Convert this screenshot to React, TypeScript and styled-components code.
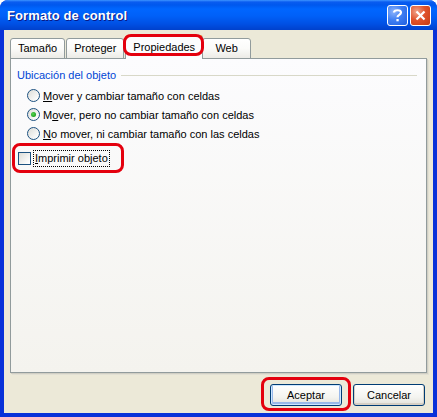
import React from "react";
import styled, { createGlobalStyle } from "styled-components";

const Global = createGlobalStyle`
  html, body { margin: 0; padding: 0; background: #fff; }
  body { font-family: Tahoma, "Liberation Sans", Arial, sans-serif; }
`;

const Window = styled.div`
  position: relative;
  width: 437px;
  height: 417px;
  display: flex;
  flex-direction: column;
  background: #0831d9;
  border-radius: 8px 8px 0 0;
  overflow: hidden;
  box-sizing: border-box;
`;

const TitleBar = styled.div`
  height: 30px;
  flex: none;
  display: flex;
  align-items: center;
  padding: 0 6px 0 7px;
  background: linear-gradient(
    to bottom,
    #3d95ff 0px,
    #0a5cf0 2px,
    #0058ee 5px,
    #0066ff 9px,
    #0060f8 16px,
    #0050e4 24px,
    #0041cc 30px
  );
`;

const Title = styled.span`
  flex: 1;
  color: #fff;
  font-family: "Liberation Sans", Arial, sans-serif;
  font-weight: bold;
  font-size: 13px;
  letter-spacing: 0.1px;
  text-shadow: 1px 1px 0 #0a1883;
  padding-top: 1px;
`;

const CaptionButton = styled.div<{ $close?: boolean }>`
  width: 21px;
  height: 21px;
  box-sizing: border-box;
  margin-left: 2px;
  border: 1px solid #fff;
  border-radius: 3px;
  display: flex;
  align-items: center;
  justify-content: center;
  color: #fff;
  background: ${(p) =>
    p.$close
      ? "radial-gradient(circle at 30% 30%, #f0a48c 0%, #e0532c 45%, #c63b12 100%)"
      : "radial-gradient(circle at 30% 30%, #8db4fb 0%, #3f7ff3 45%, #1f5fe0 100%)"};
`;

const Body = styled.div`
  flex: 1;
  margin: 0 4px 4px 4px;
  background: #ece9d8;
  display: flex;
  flex-direction: column;
  padding: 5px 6px 0 6px;
`;

const TabStrip = styled.div`
  display: flex;
  align-items: flex-end;
  height: 24px;
  flex: none;
  position: relative;
  z-index: 1;
`;

const Tab = styled.div<{ $active?: boolean }>`
  height: ${(p) => (p.$active ? "24px" : "21px")};
  min-width: ${(p) => (p.$active ? "0" : "49px")};
  text-align: center;
  box-sizing: border-box;
  padding: ${(p) => (p.$active ? "4px 7px 0 7px" : "3px 7px 0 7px")};
  margin-right: ${(p) => (p.$active ? "-1px" : "1px")};
  border: 1px solid #919b9c;
  border-bottom: ${(p) => (p.$active ? "none" : "1px solid #919b9c")};
  border-radius: 3px 3px 0 0;
  font-size: 11px;
  color: #000;
  background: ${(p) =>
    p.$active
      ? "#fcfcfe"
      : "linear-gradient(to bottom, #ffffff 0%, #fbfbf9 50%, #ecebe6 100%)"};
  ${(p) => (p.$active ? "border-top: 2px solid #e68b2c;" : "")}
`;

const Panel = styled.div`
  height: 315px;
  flex: none;
  box-sizing: border-box;
  border: 1px solid #919b9c;
  margin-top: -1px;
  background: linear-gradient(to bottom, #fcfcfe 0%, #f4f3ee 100%);
  box-shadow: 1px 1px 0 #d0cec3, 2px 2px 0 #e2e0d4;
  padding: 9px 9px 0 6px;
  display: flex;
  flex-direction: column;
`;

const GroupHeader = styled.div`
  display: flex;
  align-items: center;
  gap: 5px;
  height: 14px;
  color: #0046d5;
  font-size: 11px;
`;

const GroupLine = styled.div`
  flex: 1;
  height: 1px;
  background: #d8d8c8;
`;

const OptionList = styled.div`
  display: flex;
  flex-direction: column;
  gap: 6px;
  padding: 7px 0 0 10px;
`;

const OptionRow = styled.div`
  display: flex;
  align-items: center;
  gap: 3px;
  height: 13px;
  font-size: 11px;
  color: #000;
`;

const Radio = styled.span<{ $checked?: boolean }>`
  width: 13px;
  height: 13px;
  flex: none;
  box-sizing: border-box;
  border-radius: 50%;
  border: 1px solid #1c5180;
  background: linear-gradient(135deg, #dcdcd7 0%, #ffffff 90%);
  display: flex;
  align-items: center;
  justify-content: center;
  &::after {
    content: "";
    display: ${(p) => (p.$checked ? "block" : "none")};
    width: 5px;
    height: 5px;
    border-radius: 50%;
    background: radial-gradient(circle at 40% 40%, #55d551 0%, #21a121 70%);
  }
`;

const CheckRow = styled.div`
  display: flex;
  align-items: center;
  gap: 3px;
  height: 15px;
  margin-top: 11px;
  padding-left: 1px;
  font-size: 11px;
`;

const Check = styled.span`
  width: 13px;
  height: 13px;
  flex: none;
  box-sizing: border-box;
  border: 1px solid #1c5180;
  background: linear-gradient(135deg, #dcdcd7 0%, #ffffff 90%);
`;

const Focus = styled.span`
  outline: 1px dotted #000;
  padding: 1px 1px;
  line-height: 13px;
`;

const Key = styled.span`
  text-decoration: underline;
`;

const ButtonRow = styled.div`
  flex: 1;
  display: flex;
  justify-content: flex-end;
  align-items: flex-start;
  gap: 11px;
  padding: 11px 2px 0 0;
`;

const Button = styled.div<{ $default?: boolean }>`
  width: 72px;
  height: 22px;
  box-sizing: border-box;
  border: 1px solid #003c74;
  border-radius: 3px;
  display: flex;
  align-items: center;
  justify-content: center;
  font-size: 11px;
  color: #000;
  background: linear-gradient(to bottom, #ffffff 0%, #f4f4f0 60%, #e3e2da 100%);
  box-shadow: ${(p) =>
    p.$default
      ? "inset 0 0 0 1px #cee7ff, inset 0 -1px 0 2px #98b8ea"
      : "inset 0 -1px 0 1px #d6d0c5"};
`;

const Highlight = styled.div`
  position: absolute;
  border: 3px solid #e4000e;
  border-radius: 8px;
  box-sizing: border-box;
  pointer-events: none;
  z-index: 5;
`;

export default function App() {
  return (
    <>
      <Global />
      <Window>
        <TitleBar>
          <Title>Formato de control</Title>
          <CaptionButton>
            <svg width="11" height="14" viewBox="0 0 11 14">
              <path
                d="M2 4.5 C2 1.5 9 1.5 9 4.5 C9 6.8 5.5 6.8 5.5 9.2"
                fill="none"
                stroke="#fff"
                strokeWidth="2.2"
              />
              <rect x="4.4" y="11" width="2.3" height="2.3" fill="#fff" />
            </svg>
          </CaptionButton>
          <CaptionButton $close>
            <svg width="11" height="11" viewBox="0 0 11 11">
              <path d="M1.5 1.5 L9.5 9.5 M9.5 1.5 L1.5 9.5" stroke="#fff" strokeWidth="2.2" />
            </svg>
          </CaptionButton>
        </TitleBar>
        <Body>
          <TabStrip>
            <Tab>Tamaño</Tab>
            <Tab>Proteger</Tab>
            <Tab $active>Propiedades</Tab>
            <Tab>Web</Tab>
          </TabStrip>
          <Panel>
            <GroupHeader>
              <span>Ubicación del objeto</span>
              <GroupLine />
            </GroupHeader>
            <OptionList>
              <OptionRow>
                <Radio />
                <span>
                  <Key>M</Key>over y cambiar tamaño con celdas
                </span>
              </OptionRow>
              <OptionRow>
                <Radio $checked />
                <span>
                  M<Key>o</Key>ver, pero no cambiar tamaño con celdas
                </span>
              </OptionRow>
              <OptionRow>
                <Radio />
                <span>
                  <Key>N</Key>o mover, ni cambiar tamaño con las celdas
                </span>
              </OptionRow>
            </OptionList>
            <CheckRow>
              <Check />
              <Focus>
                <Key>I</Key>mprimir objeto
              </Focus>
            </CheckRow>
          </Panel>
          <ButtonRow>
            <Button $default>Aceptar</Button>
            <Button>Cancelar</Button>
          </ButtonRow>
        </Body>
        <Highlight style={{ left: 123, top: 34, width: 81, height: 22 }} />
        <Highlight style={{ left: 12, top: 143, width: 112, height: 30 }} />
        <Highlight style={{ left: 261, top: 377, width: 90, height: 34 }} />
      </Window>
    </>
  );
}
